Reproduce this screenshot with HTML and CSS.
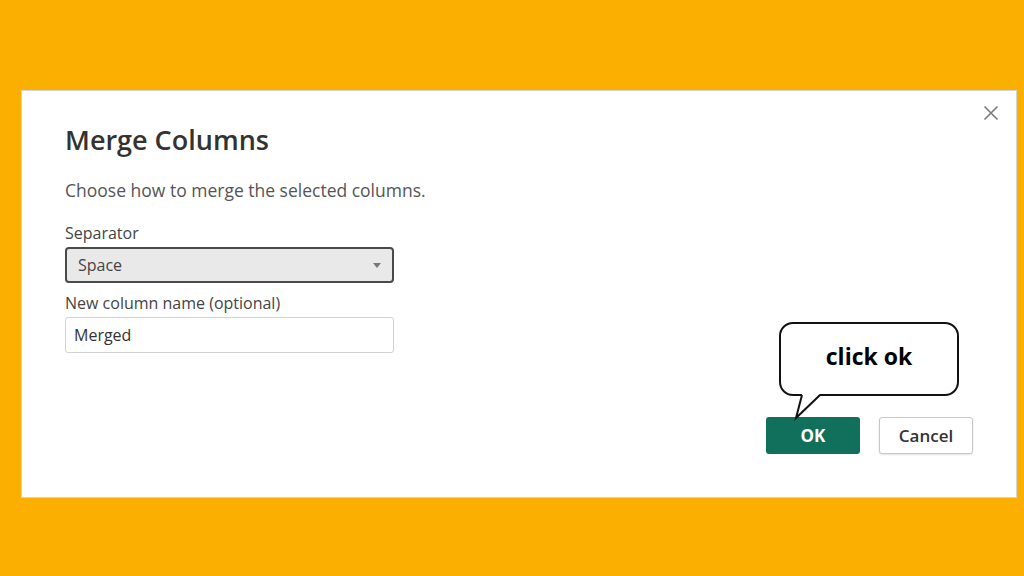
FILE: index.html
```html
<!DOCTYPE html>
<html>
<head>
  <meta charset="utf-8">
  <title>Merge Columns</title>
  <link rel="stylesheet" href="styles.css">
</head>
<body>
  <div class="dialog">
    <button class="close" aria-label="Close">
      <svg width="16" height="16" viewBox="0 0 16 16"><path d="M1.5 1.5 L14.5 14.5 M14.5 1.5 L1.5 14.5" stroke="#7a7a7a" stroke-width="1.6" fill="none"/></svg>
    </button>
    <div class="title">Merge Columns</div>
    <div class="desc">Choose how to merge the selected columns.</div>
    <div class="field__label">Separator</div>
    <div class="select">
      <span>Space</span>
      <svg width="8" height="5" viewBox="0 0 8 5"><path d="M0 0 L8 0 L4 5 Z" fill="#777"/></svg>
    </div>
    <div class="field__label second">New column name (optional)</div>
    <div class="input">Merged</div>
    <div class="footer">
      <div class="ok__wrap">
        <div class="bubble">
          click ok
          <svg class="bubble__tail" width="50" height="28" viewBox="0 0 50 28">
            <path d="M23 0 L17 24 L41 0 Z" fill="#fff"/>
            <path d="M23 1 L17 24 L41 1" stroke="#111" stroke-width="2" fill="none" stroke-linejoin="miter"/>
          </svg>
        </div>
        <button class="btn btn--ok">OK</button>
      </div>
      <button class="btn btn--cancel">Cancel</button>
    </div>
  </div>
</body>
</html>
```

FILE: styles.css
```css
html, body {
  margin: 0;
  padding: 0;
}
body {
  background: #fbaf00;
  width: 1024px;
  height: 576px;
  overflow: hidden;
  font-family: 'Open Sans', 'Noto Sans', sans-serif;
}
.dialog {
  position: relative;
  box-sizing: border-box;
  margin: 90px 0 0 21px;
  width: 996px;
  height: 408px;
  background: #fff;
  border: 1px solid #d4d4d4;
  padding: 31px 43px 43px 43px;
  display: flex;
  flex-direction: column;
  align-items: flex-start;
}
.close {
  position: absolute;
  top: 11px;
  right: 14px;
  width: 22px;
  height: 22px;
  border: 0;
  padding: 3px;
  background: none;
}
.title {
  font-size: 27px;
  font-weight: 600;
  line-height: 35px;
  color: #333;
}
.desc {
  margin-top: 22px;
  font-size: 17.5px;
  line-height: 22px;
  color: #555;
}
.field__label {
  margin-top: 22px;
  font-size: 16px;
  line-height: 20px;
  color: #444;
}
.field__label.second {
  margin-top: 10px;
}
.select {
  margin-top: 4px;
  box-sizing: border-box;
  width: 329px;
  height: 36px;
  background: #e9e9e9;
  border: 2px solid #4a4a4a;
  border-radius: 4px;
  padding: 0 11px;
  display: flex;
  align-items: center;
  justify-content: space-between;
  font-size: 16px;
  color: #444;
}
.input {
  margin-top: 4px;
  box-sizing: border-box;
  width: 329px;
  height: 36px;
  border: 1px solid #d2d2d2;
  border-radius: 3px;
  padding: 0 8px;
  display: flex;
  align-items: center;
  font-size: 16px;
  color: #333;
}
.footer {
  margin-top: auto;
  align-self: flex-end;
  display: flex;
  gap: 19px;
}
.ok__wrap {
  position: relative;
}
.btn {
  box-sizing: border-box;
  width: 94px;
  height: 37px;
  border-radius: 3px;
  font-family: 'Open Sans', sans-serif;
  font-size: 17px;
  cursor: pointer;
}
.btn--ok {
  background: #11705b;
  border: 0;
  color: #fff;
  font-weight: 700;
}
.btn--cancel {
  background: #fff;
  border: 1px solid #c8c8c8;
  box-shadow: 0 1px 2px rgba(0,0,0,0.12);
  color: #333;
  font-weight: 600;
}
.bubble {
  position: absolute;
  left: 13px;
  bottom: 58px;
  box-sizing: border-box;
  width: 180px;
  height: 74px;
  border: 2px solid #111;
  border-radius: 14px;
  background: #fff;
  display: flex;
  align-items: center;
  justify-content: center;
  padding-bottom: 6px;
  font-size: 23px;
  font-weight: 700;
  color: #000;
}
.bubble__tail {
  position: absolute;
  left: -2px;
  top: 70px;
}
```
